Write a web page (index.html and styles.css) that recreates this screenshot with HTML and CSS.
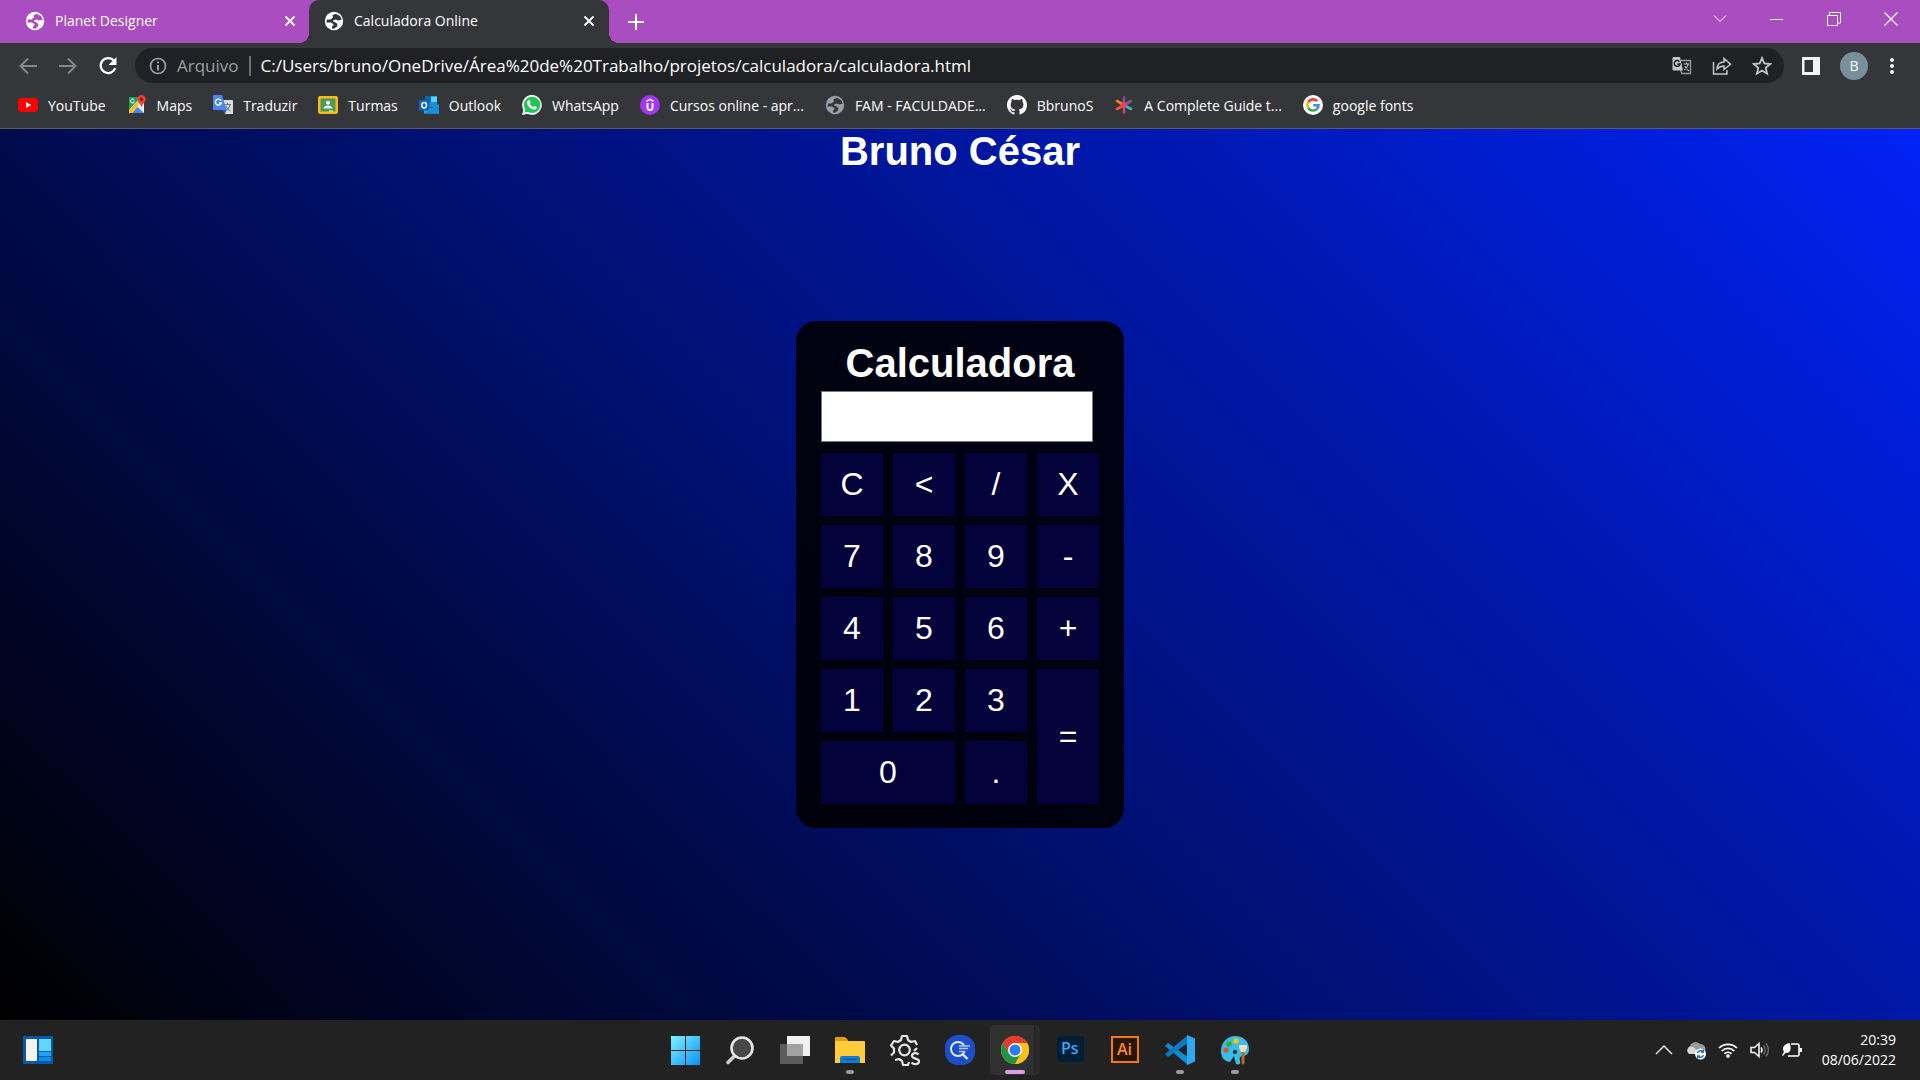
FILE: index.html
```html
<!DOCTYPE html>
<html lang="pt-BR">
<head>
<meta charset="utf-8">
<title>Calculadora Online</title>
<link rel="stylesheet" href="styles.css">
</head>
<body>
<svg class="sprite" aria-hidden="true">
  <symbol id="globe" viewBox="0 0 20 20">
    <circle cx="10" cy="10" r="9.2" fill="currentColor"/>
    <path class="cut" d="M11.5 2.8 8.4 4.6 9 6.6 6.4 8.4 3 8.5 2.4 11.4 7 11.6 9.6 13.2 9 15 7.8 15.6 8.2 17.6 10 17.8 13 15.6 13.4 13 11.2 11.2 9 10.4 9.6 9 12 8.6 13.8 9.4 17.8 8.8 16 5Z"/>
  </symbol>
  <symbol id="close" viewBox="0 0 12 12"><path d="M1.5 1.5l9 9M10.500 1.500l-9 9" stroke="currentColor" stroke-width="1.800" fill="none"/></symbol>
</svg>

<header class="browser">
  <div class="tabstrip">
    <div class="tab">
      <svg class="icon20 globe-purple"><use href="#globe"/></svg>
      <span class="tab-title">Planet Designer</span>
      <button class="plain" aria-label="Fechar guia"><svg class="icon12"><use href="#close"/></svg></button>
    </div>
    <div class="tab active">
      <svg class="icon20 globe-dark"><use href="#globe"/></svg>
      <span class="tab-title">Calculadora Online</span>
      <button class="plain" aria-label="Fechar guia"><svg class="icon12"><use href="#close"/></svg></button>
    </div>
    <button class="plain new-tab" aria-label="Nova guia"><svg width="16" height="16"><path d="M8 0v16M0 8h16" stroke="#fff" stroke-width="2"/></svg></button>
    <div class="window-controls">
      <button class="plain" aria-label="Pesquisar guias"><svg width="14" height="14"><path d="M1 3.500l6 6 6-6" stroke="#fff" fill="none"/></svg></button>
      <button class="plain" aria-label="Minimizar"><svg width="14" height="14"><path d="M0 7.500h13" stroke="#fff"/></svg></button>
      <button class="plain" aria-label="Restaurar"><svg width="14" height="14"><path d="M.5 3.500h10v10H.5zM2.500 3V.5h11v10.500H11" stroke="#fff" fill="none"/></svg></button>
      <button class="plain" aria-label="Fechar"><svg width="14" height="14"><path d="M.5.5l13 13M13.500.5l-13 13" stroke="#fff" stroke-width="1.300"/></svg></button>
    </div>
  </div>

  <div class="toolbar">
    <button class="plain" aria-label="Voltar"><svg width="20" height="20"><path d="M19 10H3M10 2.500 2.500 10l7.500 7.500" stroke="#85878a" stroke-width="2" fill="none"/></svg></button>
    <button class="plain" aria-label="Avançar"><svg width="20" height="20"><path d="M1 10h16M10 2.500l7.500 7.500-7.500 7.500" stroke="#85878a" stroke-width="2" fill="none"/></svg></button>
    <button class="plain" aria-label="Recarregar"><svg width="20" height="20"><path d="M16 4.800A7.500 7.500 0 1 0 17.300 12" stroke="#fff" stroke-width="2.300" fill="none"/><path d="M18.500 1v8h-8z" fill="#fff"/></svg></button>
    <div class="omnibox">
      <svg width="18" height="18"><circle cx="9" cy="9" r="7.500" stroke="#9aa0a6" stroke-width="1.700" fill="none"/><path d="M9 4.500v1.800M9 8v5.500" stroke="#9aa0a6" stroke-width="2"/></svg>
      <label class="scheme" for="url">Arquivo</label>
      <input id="url" class="url" type="text" value="C:/Users/bruno/OneDrive/Área%20de%20Trabalho/projetos/calculadora/calculadora.html">
      <div class="omni-actions">
        <button class="plain" aria-label="Traduzir"><svg width="20" height="20"><path d="M9 4.500h9.500v13H10l-1.500-3" fill="none" stroke="#9a9b9d" stroke-width="1.300"/><path d="M1.500 1h6.500l3 13.500H1.500A1.200 1.200 0 0 1 .5 13.500V2a1 1 0 0 1 1-1z" fill="#c4c5c7"/><path d="M7.500 5.700A2.900 2.900 0 1 0 8 8H5.500" stroke="#202124" stroke-width="1.500" fill="none"/><path d="M11.500 8h6M14.500 6.500V8M16.300 8c-.5 3-2 4.500-4 6M12.800 10.200c1 2 2.500 3.600 4.200 4.800" stroke="#c4c5c7" stroke-width="1.100" fill="none"/></svg></button>
        <button class="plain" aria-label="Compartilhar"><svg width="20" height="20"><path d="M1.500 6v12H15v-4M5 13c.3-4.500 3-7 7-7V2.500l6.500 5.800L12 13.500V10c-3 0-5 1-7 3z" stroke="#c4c5c7" stroke-width="1.500" fill="none"/></svg></button>
        <button class="plain" aria-label="Favoritar"><svg width="20" height="20"><path d="M10 2l2.300 5.500 5.900.5-4.500 3.900 1.400 5.800L10 14.600l-5.100 3.100 1.400-5.800L1.800 8l5.900-.5z" stroke="#c4c5c7" stroke-width="1.800" fill="none"/></svg></button>
      </div>
    </div>
    <button class="plain" aria-label="Painel lateral"><svg width="18" height="18"><path d="M0 0h18v18H0zM2.500 3v12H11V3z" fill="#f1f3f4" fill-rule="evenodd"/></svg></button>
    <button class="plain avatar" aria-label="Perfil">B</button>
    <button class="plain" aria-label="Menu"><svg width="8" height="18" fill="#f1f3f4"><circle cx="4" cy="3" r="2"/><circle cx="4" cy="9" r="2"/><circle cx="4" cy="15" r="2"/></svg></button>
  </div>

  <nav class="bookmarks">
    <a href="#"><svg class="icon20" viewBox="0 0 20 20"><rect y="3" width="20" height="14" rx="3.500" fill="#f00"/><path d="M8 7l5.300 3L8 13z" fill="#fff"/></svg>YouTube</a>
    <a href="#"><svg class="icon20" viewBox="0 0 20 20"><path d="M2 2h15v16H2z" fill="#e8eaed"/><path d="M2 2h12L2 15z" fill="#1da261"/><path d="M2 18v-3L13 4l2 3L4.500 18z" fill="#fbc116"/><path d="M5 18l5.500-6L17 18z" fill="#4a89f3"/><path d="M12 7l5 4v6l-6-6z" fill="#eee"/><path d="M14.500 0a4.200 4.200 0 0 1 4.200 4.200c0 3-3.200 4-4.200 8-1-4-4.200-5-4.200-8A4.200 4.200 0 0 1 14.500 0z" fill="#ea4335"/><circle cx="14.500" cy="4.200" r="1.600" fill="#811411"/><path d="M7.200 5A2 2 0 1 0 7.300 7H6" fill="none" stroke="#fff"/></svg>Maps</a>
    <a href="#"><svg class="icon20" viewBox="0 0 20 20"><path d="M8 5h11a1 1 0 0 1 1 1v13H12z" fill="#dadce0"/><path d="M11 9.500h7M14.500 8v1.500M17 9.500c-.5 3-2.500 5-4.500 6M12.500 11c1.500 3 3 4 5 5" stroke="#607988" stroke-width="1.100" fill="none"/><path d="M1 0h8l4.500 15H1a1 1 0 0 1-1-1V1a1 1 0 0 1 1-1z" fill="#4a86f0"/><path d="M9 15h4.500L12 19z" fill="#2a56c6"/><path d="M8 5.600A3 3 0 1 0 8.300 8H6" fill="none" stroke="#fff" stroke-width="1.400"/></svg>Traduzir</a>
    <a href="#"><svg class="icon20" viewBox="0 0 20 20"><rect y="1" width="20" height="18" rx="2" fill="#f9bc15"/><path d="M2.500 3.500h15v13h-15z" fill="#50965f"/><circle cx="10" cy="7.800" r="2" fill="#fff"/><path d="M5.500 13.500c0-4 9-4 9 0z" fill="#e7f2e9"/><path d="M11 15.500h4v1h-4z" fill="#fff"/></svg>Turmas</a>
    <a href="#"><svg class="icon20" viewBox="0 0 20 20"><path d="M6 1.500h12V12H6z" fill="#1490df"/><path d="M12 1.500h6V7h-6z" fill="#50d9ff"/><path d="M6 1.500h6V7H6z" fill="#0364b8"/><path d="M5 9l7.500 4.500L20 9v9.500H5z" fill="#28a8ea"/><path d="M20 9v9.500H6z" fill="#1490df"/><path d="M0 5h10.500v10.500H0z" fill="#0a64c0"/><ellipse cx="5.200" cy="10.200" rx="2.300" ry="2.700" fill="none" stroke="#fff" stroke-width="1.500"/></svg>Outlook</a>
    <a href="#"><svg class="icon20" viewBox="0 0 20 20"><path d="M10 0a9.900 9.900 0 1 1-4.700 18.700L0 20l1.400-5.200A9.900 9.900 0 0 1 10 0z" fill="#fff"/><circle cx="10.100" cy="9.900" r="8.200" fill="#1fc659"/><path d="M2.300 17.700l1-4 3 3z" fill="#1fc659"/><path d="M6.500 5.200h1.200l1 2.400-1 1.200c.8 1.600 2 2.700 3.600 3.400l1.200-1.400 2.300 1.200c0 1.800-1.500 2.700-2.800 2.600C8.500 14 5.600 11 5 8c-.1-1.200.6-2.300 1.500-2.800z" fill="#fff"/></svg>WhatsApp</a>
    <a href="#"><svg class="icon20" viewBox="0 0 20 20"><circle cx="10" cy="10" r="10" fill="#a435f0"/><path d="M6.500 6.300l3.500-2 3.500 2" stroke="#fff" stroke-width="1.500" fill="none"/><path d="M7.500 8v4.500a2.500 2.500 0 0 0 5 0V8" stroke="#fff" stroke-width="2" fill="none"/></svg>Cursos online - apr...</a>
    <a href="#"><svg class="icon20 globe-dark muted"><use href="#globe"/></svg>FAM - FACULDADE...</a>
    <a href="#"><svg class="icon20" viewBox="0 0 16 16"><path fill="#fff" d="M8 0C3.580 0 0 3.580 0 8c0 3.540 2.290 6.530 5.470 7.590.4.070.55-.17.55-.38 0-.19-.01-.82-.01-1.490-2.010.37-2.530-.49-2.690-.94-.09-.23-.48-.94-.82-1.130-.28-.15-.68-.52-.01-.53.63-.01 1.080.58 1.230.82.72 1.210 1.870.87 2.330.66.070-.52.280-.87.510-1.070-1.780-.2-3.640-.89-3.640-3.950 0-.87.31-1.590.82-2.150-.08-.2-.36-1.020.08-2.120 0 0 .67-.21 2.200.82.640-.18 1.320-.27 2-.27s1.360.09 2 .27c1.530-1.040 2.200-.82 2.200-.82.44 1.100.16 1.920.08 2.120.51.56.82 1.270.82 2.150 0 3.070-1.870 3.750-3.650 3.950.29.25.54.73.54 1.480 0 1.070-.01 1.930-.01 2.200 0 .21.15.46.55.38A8.010 8.010 0 0 0 16 8c0-4.420-3.580-8-8-8z"/></svg>BbrunoS</a>
    <a href="#"><svg class="icon20" viewBox="0 0 20 20" stroke-width="2.600" stroke-linecap="round"><path d="M10 10V2.500" stroke="#8a4a9e"/><path d="M10 10v7.500" stroke="#c04a70"/><path d="M10 10L3 6" stroke="#ff7a18"/><path d="M10 10l7-4" stroke="#7d5a80"/><path d="M10 10l-7 4" stroke="#f0562d"/><path d="M10 10l7 4" stroke="#35b8c8"/><circle cx="10" cy="10" r="1.500" fill="#f04060" stroke="#f04060"/></svg>A Complete Guide t...</a>
    <a href="#"><svg class="icon20" viewBox="0 0 20 20"><circle cx="10" cy="10" r="10" fill="#fff"/><g fill="none" stroke-width="2.600"><path d="M14.200 6.200A5.600 5.600 0 0 0 5.200 7.200" stroke="#ea4335"/><path d="M5.200 7.200a5.600 5.600 0 0 0 0 5.600" stroke="#fbbc05"/><path d="M5.200 12.800a5.600 5.600 0 0 0 8.600 1.300" stroke="#34a853"/><path d="M13.800 14.100a5.200 5.200 0 0 0 1.700-3.900H10.300" stroke="#4285f4"/></g></svg>google fonts</a>
  </nav>
</header>

<main class="page">
  <h1 class="heading">Bruno César</h1>
  <section class="calculator">
    <h2 class="heading">Calculadora</h2>
    <input class="display" type="text" aria-label="Resultado" readonly>
    <div class="keys">
      <button>C</button><button>&lt;</button><button>/</button><button>X</button>
      <button>7</button><button>8</button><button>9</button><button>-</button>
      <button>4</button><button>5</button><button>6</button><button>+</button>
      <button>1</button><button>2</button><button>3</button><button class="tall">=</button>
      <button class="wide">0</button><button>.</button>
    </div>
  </section>
</main>

<footer class="taskbar">
  <div class="task-left">
    <button class="plain" aria-label="Widgets"><svg width="30" height="28"><rect width="30" height="28" rx="1" fill="#0c59a4"/><rect x="3" y="3" width="11" height="22" rx="1" fill="#f3f3f5"/><path d="M16 3h12v12H16z" fill="#62d5ff"/><path d="M16 16h12v4H16z" fill="#1fa2f5"/><path d="M16 21h12v4H16z" fill="#0a8cf0"/></svg></button>
  </div>
  <div class="apps">
    <button class="app" aria-label="Iniciar"><svg class="icon32" viewBox="0 0 32 32"><defs><linearGradient id="win" x2="1" y2="1"><stop stop-color="#7df3ff"/><stop offset="1" stop-color="#0a91f5"/></linearGradient></defs><path d="M2 2h14v14H2zM17 2h14v14H17zM2 17h14v14H2zM17 17h14v14H17z" fill="url(#win)"/></svg></button>
    <button class="app" aria-label="Pesquisar"><svg class="icon32" viewBox="0 0 32 32"><path d="M4 28.500l7-7" stroke="#cdd0d3" stroke-width="3.500" stroke-linecap="round"/><circle cx="18" cy="14" r="10.500" fill="#484848" stroke="#e4e6e8" stroke-width="2.600"/></svg></button>
    <button class="app" aria-label="Visão de tarefas"><svg class="icon32" viewBox="0 0 32 32"><path d="M1 10h23v20H1z" fill="#5c5c5c"/><path d="M8 2h23v20H8z" fill="#f0f0f0"/><path d="M8 10h16v12H8z" fill="#a2a2a2"/></svg></button>
    <button class="app running" aria-label="Explorador de Arquivos"><svg class="icon32" viewBox="0 0 32 32"><path d="M1 4q0-1 1-1h9l3 3v5H1z" fill="#e29c06"/><path d="M1 8q0-1 1-1h28q1 0 1 1v21H1z" fill="#ffcb3d"/><path d="M6 29v-5q0-2 2-2h16q2 0 2 2v5z" fill="#0f7dd0"/><path d="M9 25.500h14" stroke="#07508d"/></svg></button>
    <button class="app" aria-label="Configurações"><svg class="icon32" viewBox="0 0 32 32"><g fill="none" stroke="#e6e6e6" stroke-width="2.200" stroke-linejoin="round"><path d="M28 11l-2-4-4 1-3-2-1-4h-5l-1 4-3 2-4-1-3 4.500 3 3v4l-3 3M6 26l4-1 3 2 1 4h5l1-3M25 17l3-3"/><circle cx="15.500" cy="16" r="5.300"/><path d="M29.500 20.500c-1.500-2-6.500-2-6.500 1.300 0 3.700 7 2 7 5.500 0 3.600-5.500 3.400-7.500 1.200"/></g></svg></button>
    <button class="app" aria-label="Pesquisa rápida"><svg class="icon32" viewBox="0 0 32 32"><rect x="1" y="1" width="30" height="30" rx="13" fill="#1c4fc9"/><circle cx="14" cy="15" r="7" fill="none" stroke="#dfe9ff" stroke-width="2"/><path d="M18.500 20l5 5" stroke="#dfe9ff" stroke-width="2.400"/><path d="M14 11.500h16v6H14z" fill="#1c4fc9"/><path d="M15 12h11M15 14.500h9M15 17.500h6" stroke="#a9c9ff" stroke-width="1.700"/></svg></button>
    <button class="app running current" aria-label="Google Chrome"><svg class="icon32" viewBox="0 0 32 32"><circle cx="16" cy="16" r="14" fill="#fbc116"/><path d="M16 16L3.900 9a14 14 0 0 1 24.200 0z" fill="#e33b2e"/><path d="M16 9h12.100A14 14 0 0 0 3.900 9l6 10.500z" fill="#e33b2e"/><path d="M3.900 9A14 14 0 0 0 16 30l6-10.500-6 3.500-6-3.500z" fill="#229342"/><path d="M22 12.500L22 19.500 16 30A14 14 0 0 0 28.100 9H16z" fill="#fbc116"/><circle cx="16" cy="16" r="7" fill="#fff"/><circle cx="16" cy="16" r="5.500" fill="#2c7df0"/></svg></button>
    <button class="app" aria-label="Photoshop"><svg class="icon32" viewBox="0 0 32 32"><rect x="3" y="2" width="27" height="26" rx="4" fill="#001e36"/><text x="7" y="20" font-size="16" class="glyph" fill="#31a8ff">Ps</text></svg></button>
    <button class="app" aria-label="Illustrator"><svg class="icon32" viewBox="0 0 32 32"><rect x="3" y="3" width="26" height="25" fill="#2a1500" stroke="#f37a10" stroke-width="2"/><text x="8" y="21" font-size="16" class="glyph" fill="#ff8a1c">Ai</text></svg></button>
    <button class="app running" aria-label="Visual Studio Code"><svg class="icon32" viewBox="0 0 32 32"><path d="M1 12l3-3 20 14v8z" fill="#1389d0"/><path d="M1 20l3 3L24 9V1z" fill="#0f78bf"/><path d="M23 1l8 3.500v23L23 31z" fill="#2ea8ee"/></svg></button>
    <button class="app running" aria-label="Paint"><svg class="icon32" viewBox="0 0 32 32"><path d="M16 2C25 2 30 8 30 15c0 5-3 7-6 7s-4 2-3 5-1 4-4 3l-2-8-4 6C4 27 2 22 2 17 2 9 8 2 16 2z" fill="#38bdea"/><circle cx="10" cy="10" r="2.800" fill="#39a935"/><circle cx="17" cy="7" r="2.800" fill="#f7c600"/><circle cx="7" cy="16" r="2.600" fill="#e5532d"/><circle cx="16" cy="18" r="2.200" fill="#173d52"/><path d="M20 11h8v3l-2 4h-4l-2-4z" fill="#efdcc0"/><path d="M22.500 18h3v11q-1.500 3-3 0z" fill="#b96a1c"/></svg></button>
  </div>
  <div class="tray">
    <button class="plain" aria-label="Ícones ocultos"><svg width="20" height="20"><path d="M2 14l8-8 8 8" stroke="#fff" stroke-width="1.300" fill="none"/></svg></button>
    <svg width="20" height="20"><path d="M3 13a4 4 0 0 1 1-7 6 6 0 0 1 10-2 5 5 0 0 1 5 7l-3 3H3z" fill="#9b9b9b"/><path d="M3 14a4 4 0 0 1 1-7c4-1 6 2 8 7z" fill="#d8d8d8"/><circle cx="14.500" cy="14" r="5.500" fill="#fff"/><path d="M11.500 13a3.200 3.200 0 0 1 5.500-1.300M17.500 15a3.200 3.200 0 0 1-5.500 1.300M17.300 9.500v2.500h-2.500M11.700 18.500V16h2.500" stroke="#1677c8" stroke-width="1.400" fill="none"/></svg>
    <svg width="20" height="20" fill="none" stroke="#fff" stroke-width="1.700"><path d="M1 8a13 13 0 0 1 18 0M3.700 11a9 9 0 0 1 12.600 0M6.500 13.800a5 5 0 0 1 7 0"/><circle cx="10" cy="16" r="1" fill="#fff"/></svg>
    <svg width="20" height="20" fill="none" stroke="#fff" stroke-width="1.500"><path d="M1 7.500h3.500L9 3.500v13l-4.500-4H1zM11 7.500a4 4 0 0 1 0 5"/><path d="M13.500 5.500a7 7 0 0 1 0 9M16 3.500a10 10 0 0 1 0 13" stroke="#6b6b6b"/></svg>
    <svg width="20" height="20"><path d="M9 4h6.500A1.500 1.500 0 0 1 17 5.500v9a1.500 1.500 0 0 1-1.500 1.500H6" stroke="#fff" stroke-width="1.600" fill="none"/><path d="M17.500 8H20v4h-2.500z" fill="#fff"/><path d="M7.500 3c2 4 1.500 9-2 10l-2-.2L1 16l-1-1 2-3C-1 7 3 4 7.500 3z" fill="#fff"/></svg>
    <time class="clock" datetime="2022-06-08T20:39">20:39<br>08/06/2022</time>
  </div>
</footer>
</body>
</html>
```
FILE: styles.css
```css
* { box-sizing: border-box; }

body {
  margin: 0;
  min-height: 100vh;
  display: flex;
  flex-direction: column;
  font-family: "Open Sans", "Noto Sans", sans-serif;
  font-size: 14px;
  color: #fff;
}

button, input { font: inherit; color: inherit; }
svg { display: block; flex: none; }
.sprite { position: absolute; width: 0; height: 0; }

.plain {
  display: flex;
  align-items: center;
  justify-content: center;
  padding: 0;
  border: 0;
  background: none;
}

.icon12 { width: 12px; height: 12px; }
.icon20 { width: 20px; height: 20px; }
.icon32 { width: 32px; height: 32px; }

.globe-purple { --cut: #a94dc1; }
.globe-dark { --cut: #35363a; }
.muted { color: #9aa0a6; }
.cut { fill: var(--cut); }
.glyph { font-family: "Open Sans", sans-serif; font-weight: 600; }

/* Browser window */
.browser { background: #35363a; border-bottom: 1px solid #5c5d61; }

.tabstrip {
  display: flex;
  height: 43px;
  background: #a94dc1;
}

.tab {
  display: flex;
  align-items: center;
  gap: 10px;
  width: 309px;
  padding: 0 13px 2px 25px;
}

.tab.active {
  position: relative;
  width: 300px;
  padding-left: 15px;
  padding-right: 14px;
  border-radius: 10px 10px 0 0;
  background: #35363a;
}

.tab.active::before,
.tab.active::after {
  content: "";
  position: absolute;
  bottom: 0;
  width: 10px;
  height: 10px;
}

.tab.active::before {
  right: 100%;
  background: radial-gradient(circle at 0 0, transparent 10px, #35363a 10px);
}

.tab.active::after {
  left: 100%;
  background: radial-gradient(circle at 100% 0, transparent 10px, #35363a 10px);
}

.tab-title { flex: 1; }
.new-tab { width: 54px; }

.window-controls {
  display: flex;
  margin-left: auto;
  padding: 0 1px 6px 0;
}

.window-controls .plain { width: 57px; }

.toolbar {
  display: flex;
  align-items: center;
  gap: 20px;
  padding: 5px 24px 4px 18px;
}

.omnibox {
  flex: 1;
  display: flex;
  align-items: center;
  gap: 10px;
  height: 35px;
  margin-left: -3px;
  margin-right: -2px;
  padding: 0 12px 0 14px;
  border-radius: 18px;
  background: #202124;
  font-size: 17px;
}

.scheme {
  padding-right: 10px;
  border-right: 2px solid #6d6f73;
  line-height: 20px;
  color: #9aa0a6;
}

.url {
  flex: 1;
  padding: 0;
  border: 0;
  outline: 0;
  background: none;
}

.omni-actions { display: flex; gap: 20px; }

.avatar {
  width: 28px;
  height: 28px;
  border-radius: 50%;
  background: #78909c;
}

.bookmarks {
  display: flex;
  gap: 21px;
  height: 41px;
  padding: 0 18px 5px;
}

.bookmarks a {
  display: flex;
  align-items: center;
  gap: 10px;
  color: #fff;
  text-decoration: none;
  white-space: nowrap;
}

/* Calculator page */
.page {
  flex: 1;
  display: grid;
  justify-items: center;
  background: linear-gradient(45deg, #000, #0022f5);
  font-family: "Liberation Sans", Arial, sans-serif;
}

.page > * { grid-area: 1 / 1; }

.heading {
  margin: 0;
  font-size: 40px;
  line-height: 44px;
  text-align: center;
}

.calculator {
  align-self: center;
  padding: 20px 25px 24px;
  border-radius: 20px;
  background: rgba(0, 0, 0, 0.87);
}

.display {
  display: block;
  width: 272px;
  height: 51px;
  margin: 6px 0 11px;
  border: 1px solid #767676;
  background: #fff;
  color: #000;
}

.keys {
  display: grid;
  grid-template-columns: repeat(4, 62px);
  grid-auto-rows: 63px;
  gap: 9px 10px;
}

.keys button {
  padding: 0;
  border: 0;
  background: #03023a;
  font-size: 32px;
}

.tall { grid-area: 4 / 4 / span 2; }
.wide { grid-column: span 2; }

/* Taskbar */
.taskbar {
  display: grid;
  grid-template-columns: 1fr auto 1fr;
  align-items: center;
  height: 60px;
  background: #222;
}

.task-left { padding-left: 23px; }
.apps { display: flex; gap: 5px; }

.app {
  position: relative;
  display: flex;
  align-items: center;
  justify-content: center;
  width: 50px;
  height: 50px;
  padding: 0;
  border: 0;
  border-radius: 5px;
  background: none;
}

.current {
  background: linear-gradient(90deg, #303030 44px, #202020 44px, #2b2b2b 46px);
}

.running::after {
  content: "";
  position: absolute;
  bottom: 1px;
  width: 8px;
  height: 4px;
  border-radius: 2px;
  background: #9a9a9a;
}

.current::after { width: 20px; background: #dba0e3; }

.tray {
  display: flex;
  justify-content: flex-end;
  align-items: center;
  gap: 12px;
  padding-right: 24px;
}

.clock {
  margin-left: 8px;
  line-height: 20px;
  text-align: right;
}
```
